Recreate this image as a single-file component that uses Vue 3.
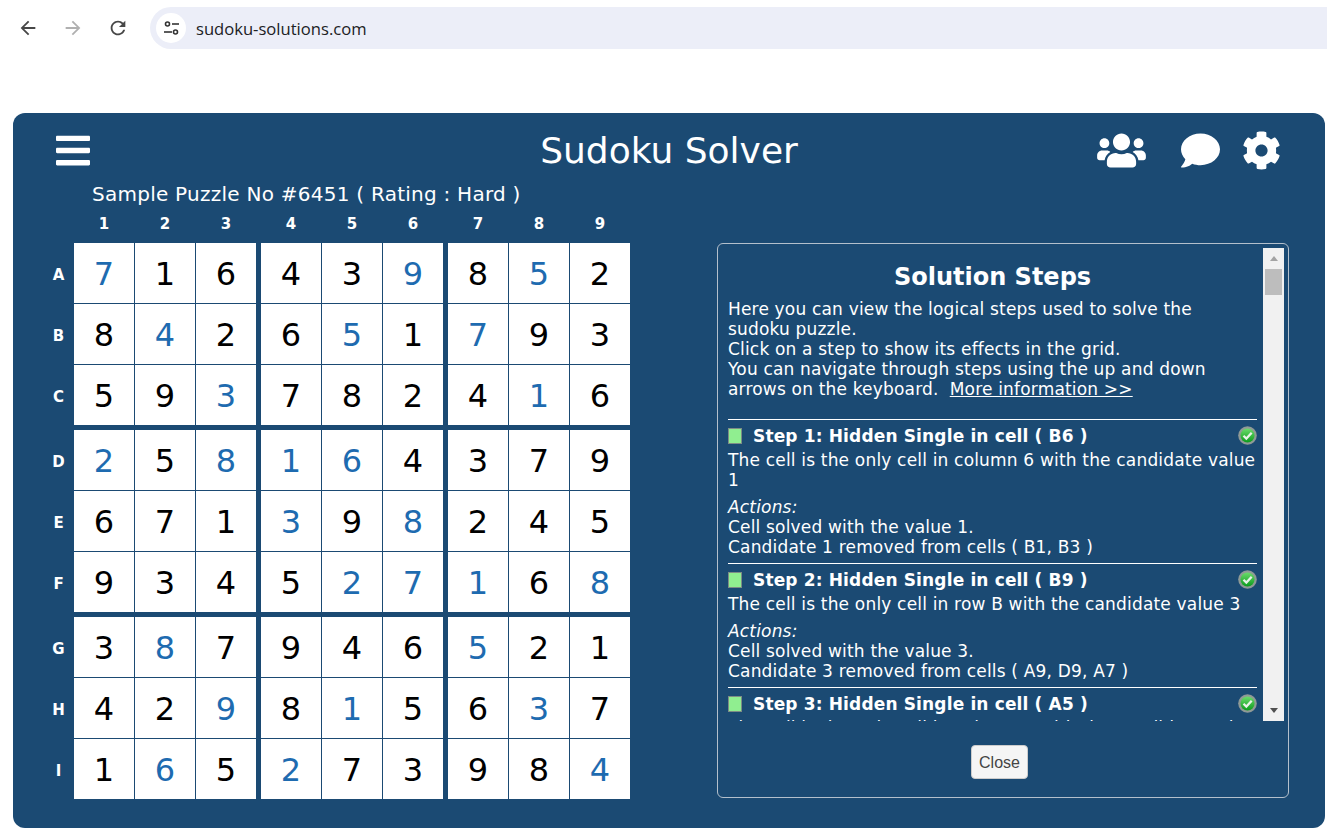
<script setup>
const rowNames = ['A', 'B', 'C', 'D', 'E', 'F', 'G', 'H', 'I'];
const columns = [1, 2, 3, 4, 5, 6, 7, 8, 9];

const values = [
  '716439852',
  '842651793',
  '593782416',
  '258164379',
  '671398245',
  '934527168',
  '387946521',
  '429815637',
  '165273984'
];

// columns of the digits found by the solver (blue ones)
const solved = [
  [0, 5, 7],
  [1, 4, 6],
  [2, 7],
  [0, 2, 3, 4],
  [3, 5],
  [4, 5, 6, 8],
  [1, 6],
  [2, 4, 7],
  [1, 3, 8]
];

const steps = [
  {
    title: 'Step 1: Hidden Single in cell ( B6 )',
    text: 'The cell is the only cell in column 6 with the candidate value 1',
    actions: ['Cell solved with the value 1.', 'Candidate 1 removed from cells ( B1, B3 )']
  },
  {
    title: 'Step 2: Hidden Single in cell ( B9 )',
    text: 'The cell is the only cell in row B with the candidate value 3',
    actions: ['Cell solved with the value 3.', 'Candidate 3 removed from cells ( A9, D9, A7 )']
  },
  {
    title: 'Step 3: Hidden Single in cell ( A5 )',
    text: 'The cell is the only cell in column 5 with the candidate value 3',
    actions: ['Cell solved with the value 3.']
  }
];
</script>

<template>
  <div class="page">
    <div class="browser-bar">
      <button class="nav-btn">
        <svg viewBox="0 0 24 24" width="22" height="22"><path fill="#474747" d="M20 11H7.83l5.59-5.59L12 4l-8 8 8 8 1.41-1.41L7.83 13H20v-2z" /></svg>
      </button>
      <button class="nav-btn">
        <svg viewBox="0 0 24 24" width="22" height="22"><path fill="#b0b0b0" d="M4 11h12.17l-5.59-5.59L12 4l8 8-8 8-1.41-1.41L16.17 13H4v-2z" /></svg>
      </button>
      <button class="nav-btn">
        <svg viewBox="0 0 24 24" width="22" height="22"><path fill="#474747" d="M17.65 6.35C16.2 4.9 14.21 4 12 4c-4.42 0-7.99 3.58-7.99 8s3.57 8 7.99 8c3.73 0 6.84-2.55 7.73-6h-2.08c-.82 2.33-3.04 4-5.65 4-3.31 0-6-2.69-6-6s2.69-6 6-6c1.66 0 3.14.69 4.22 1.78L13 11h7V4l-2.35 2.35z" /></svg>
      </button>
      <div class="address">
        <span class="site-icon">
          <svg viewBox="0 0 18 18" width="18" height="18" fill="none" stroke="#333" stroke-width="1.6">
            <circle cx="5.5" cy="5" r="2" />
            <path d="M10 5h7" />
            <path d="M2 13h8" />
            <circle cx="13.5" cy="13" r="2" />
          </svg>
        </span>
        <span class="url">sudoku-solutions.com</span>
      </div>
    </div>

    <div class="solver">
      <header class="solver-head">
        <div class="head-left">
          <svg class="icon-bars" viewBox="0 0 448 512"><path fill="#fff" d="M16 132h416c8.837 0 16-7.163 16-16V76c0-8.837-7.163-16-16-16H16C7.163 60 0 67.163 0 76v40c0 8.837 7.163 16 16 16zm0 160h416c8.837 0 16-7.163 16-16v-40c0-8.837-7.163-16-16-16H16c-8.837 0-16 7.163-16 16v40c0 8.837 7.163 16 16 16zm0 160h416c8.837 0 16-7.163 16-16v-40c0-8.837-7.163-16-16-16H16c-8.837 0-16 7.163-16 16v40c0 8.837 7.163 16 16 16z" /></svg>
        </div>
        <h1 class="solver-title">Sudoku Solver</h1>
        <div class="head-right">
          <svg class="icon-users" viewBox="0 0 640 512"><path fill="#fff" d="M96 224c35.3 0 64-28.7 64-64s-28.7-64-64-64-64 28.7-64 64 28.7 64 64 64zm448 0c35.3 0 64-28.7 64-64s-28.7-64-64-64-64 28.7-64 64 28.7 64 64 64zm32 32h-64c-17.6 0-33.5 7.1-45.1 18.6 40.3 22.1 68.9 62 75.1 109.4h66c17.7 0 32-14.3 32-32v-32c0-35.3-28.7-64-64-64zm-256 0c61.9 0 112-50.1 112-112S381.9 32 320 32 208 82.1 208 144s50.1 112 112 112zm76.8 32h-8.3c-20.8 10-43.9 16-68.5 16s-47.6-6-68.5-16h-8.3C179.6 288 128 339.6 128 403.2V432c0 26.5 21.5 48 48 48h288c26.5 0 48-21.5 48-48v-28.8c0-63.6-51.6-115.2-115.2-115.2zm-223.7-13.4C161.5 263.1 145.6 256 128 256H64c-35.3 0-64 28.7-64 64v32c0 17.7 14.3 32 32 32h65.9c6.3-47.4 34.9-87.3 75.2-109.4z" /></svg>
          <svg class="icon-comment" viewBox="0 0 512 512"><path fill="#fff" d="M256 32C114.6 32 0 125.1 0 240c0 49.6 21.4 95 57 130.7C44.5 421.1 2.7 466 2.2 466.5c-2.2 2.3-2.8 5.7-1.5 8.7S4.8 480 8 480c66.3 0 116-31.8 140.6-51.4 32.7 12.3 69 19.4 107.4 19.4 141.4 0 256-93.1 256-208S397.4 32 256 32z" /></svg>
          <svg class="icon-cog" viewBox="0 0 512 512"><path fill="#fff" d="M487.4 315.7l-42.6-24.6c4.3-23.2 4.3-47 0-70.2l42.6-24.6c4.9-2.8 7.1-8.6 5.5-14-11.1-35.6-30-67.8-54.7-94.6-3.8-4.1-10-5.1-14.8-2.3L380.8 110c-17.9-15.4-38.5-27.3-60.8-35.1V25.8c0-5.6-3.9-10.5-9.4-11.7-36.7-8.2-74.3-7.8-109.2 0-5.5 1.2-9.4 6.1-9.4 11.7V75c-22.2 7.9-42.8 19.8-60.8 35.1L88.7 85.5c-4.9-2.8-11-1.9-14.8 2.3-24.7 26.7-43.6 58.9-54.7 94.6-1.7 5.4.6 11.2 5.5 14L67.3 221c-4.3 23.2-4.3 47 0 70.2l-42.6 24.6c-4.9 2.8-7.1 8.6-5.5 14 11.1 35.6 30 67.8 54.7 94.6 3.8 4.1 10 5.1 14.8 2.3l42.6-24.6c17.9 15.4 38.5 27.3 60.8 35.1v49.2c0 5.6 3.9 10.5 9.4 11.7 36.7 8.2 74.3 7.8 109.2 0 5.5-1.2 9.4-6.1 9.4-11.7v-49.2c22.2-7.9 42.8-19.8 60.8-35.1l42.6 24.6c4.9 2.8 11 1.9 14.8-2.3 24.7-26.7 43.6-58.9 54.7-94.6 1.5-5.5-.7-11.3-5.6-14.1zM256 336c-44.1 0-80-35.9-80-80s35.9-80 80-80 80 35.9 80 80-35.9 80-80 80z" /></svg>
        </div>
      </header>

      <div class="puzzle-name">Sample Puzzle No #6451 ( Rating : Hard )</div>

      <div class="solver-main">
        <div class="board">
          <div class="board-row head-row">
            <span class="row-label"></span>
            <span
              v-for="c in columns"
              :key="c"
              class="col-label"
              :class="{ 'block-left': c === 4 || c === 7 }"
            >{{ c }}</span>
          </div>
          <div
            v-for="(name, r) in rowNames"
            :key="name"
            class="board-row"
            :class="{ 'block-top': r === 3 || r === 6 }"
          >
            <span class="row-label">{{ name }}</span>
            <span
              v-for="(digit, c) in values[r]"
              :key="c"
              class="cell"
              :class="{ 'block-left': c === 3 || c === 6, solved: solved[r].includes(c) }"
            >{{ digit }}</span>
          </div>
        </div>

        <div class="steps-dialog">
          <div class="steps-frame">
            <div class="steps-scroll">
              <h2 class="steps-title">Solution Steps</h2>
              <p class="steps-intro">
                Here you can view the logical steps used to solve the<br />
                sudoku puzzle.<br />
                Click on a step to show its effects in the grid.<br />
                You can navigate through steps using the up and down<br />
                arrows on the keyboard.&nbsp; <a class="more-link">More information &gt;&gt;</a>
              </p>
              <div v-for="step in steps" :key="step.title" class="step">
                <div class="step-head">
                  <span class="step-mark"></span>
                  <span class="step-name">{{ step.title }}</span>
                  <svg class="step-ok" viewBox="0 0 20 20" width="19" height="19">
                    <defs>
                      <linearGradient id="okFill" x1="0" y1="0" x2="0" y2="1">
                        <stop offset="0" stop-color="#6bdc6b" />
                        <stop offset="1" stop-color="#0b9a1c" />
                      </linearGradient>
                    </defs>
                    <circle cx="10" cy="10" r="9.8" fill="#8f9a96" />
                    <circle cx="10" cy="10" r="7.4" fill="url(#okFill)" />
                    <path d="M5.8 10.2l3 3 5.6-6" fill="none" stroke="#e8f2e8" stroke-width="2.4" />
                  </svg>
                </div>
                <div class="step-text">{{ step.text }}</div>
                <div class="step-actions">
                  <em>Actions:</em>
                  <div v-for="action in step.actions" :key="action">{{ action }}</div>
                </div>
              </div>
            </div>
            <div class="scrollbar">
              <span class="arrow-up"></span>
              <span class="thumb"></span>
              <span class="arrow-down"></span>
            </div>
          </div>
          <div class="dialog-foot">
            <button class="close-btn">Close</button>
          </div>
        </div>
      </div>
    </div>
  </div>
</template>

<style>
html, body {
  overflow: hidden;
  background: #fff;
}
</style>

<style scoped>
.page {
  width: 1327px;
  height: 828px;
  overflow: hidden;
  font-family: "DejaVu Sans", Verdana, sans-serif;
}

.browser-bar {
  display: flex;
  align-items: center;
  height: 42px;
  padding: 7px 0 0 5px;
  margin-bottom: 64px;
  overflow: hidden;
}

.nav-btn {
  display: flex;
  align-items: center;
  justify-content: center;
  width: 45px;
  height: 42px;
  padding: 0;
  border: none;
  background: none;
}

.address {
  display: flex;
  align-items: center;
  flex: 1;
  gap: 10px;
  height: 42px;
  margin-left: 10px;
  margin-right: -30px;
  padding-left: 6px;
  border-radius: 21px;
  background: #eceef8;
}

.site-icon {
  display: flex;
  align-items: center;
  justify-content: center;
  width: 30px;
  height: 30px;
  border-radius: 50%;
  background: #fff;
}

.url {
  font-family: "Open Sans", sans-serif;
  font-size: 16.6px;
  color: #202124;
}

.solver {
  height: 715px;
  margin: 0 2px 0 13px;
  padding-top: 17px;
  box-sizing: border-box;
  border-radius: 12px;
  background: #1b4a73;
  color: #fff;
}

.solver-head {
  display: grid;
  grid-template-columns: 1fr auto 1fr;
  align-items: center;
  height: 40px;
}

.head-left {
  display: flex;
  padding-left: 43px;
}

.head-right {
  display: flex;
  align-items: center;
  justify-content: flex-end;
  padding-right: 44px;
}

.icon-bars {
  width: 34px;
  height: 39px;
}

.icon-users {
  width: 49px;
  height: 39px;
  margin-right: 35px;
}

.icon-comment {
  width: 39px;
  height: 39px;
  margin-right: 22px;
}

.icon-cog {
  width: 39px;
  height: 39px;
}

.solver-title {
  height: 40px;
  margin: 0;
  font-size: 36px;
  font-weight: 400;
  line-height: 41px;
}

.puzzle-name {
  margin: 12px 0 0 79px;
  font-size: 20px;
  letter-spacing: 0.25px;
  line-height: 24px;
}

.solver-main {
  display: flex;
  align-items: flex-end;
  padding-left: 31px;
}

.board {
  display: flex;
  flex-direction: column;
  gap: 1px;
}

.board-row {
  display: flex;
  gap: 1px;
}

.head-row {
  height: 36px;
  padding-top: 8px;
  box-sizing: border-box;
}

.row-label {
  display: flex;
  align-items: center;
  justify-content: center;
  width: 29px;
  padding-top: 3px;
  box-sizing: border-box;
  font-size: 15px;
  font-weight: 700;
}

.col-label {
  width: 60px;
  font-size: 15px;
  font-weight: 700;
  line-height: 20px;
  text-align: center;
}

.cell {
  display: flex;
  align-items: center;
  justify-content: center;
  width: 60px;
  height: 60px;
  padding-top: 2px;
  box-sizing: border-box;
  background: #fff;
  color: #000;
  font-size: 32px;
}

.cell.solved {
  color: #1e6bb0;
}

.block-left {
  margin-left: 4px;
}

.block-top {
  margin-top: 4px;
}

.steps-dialog {
  width: 572px;
  height: 555px;
  margin: 0 0 1px 87px;
  padding-top: 4px;
  box-sizing: border-box;
  border: 1px solid #b4c0cc;
  border-radius: 6px;
}

.steps-frame {
  display: flex;
  height: 473px;
}

.steps-scroll {
  width: 529px;
  padding-left: 10px;
  overflow: hidden;
  font-size: 17px;
  letter-spacing: 0.18px;
  line-height: 20px;
}

.steps-title {
  margin: 14px 0 7px;
  font-size: 24px;
  font-weight: 700;
  letter-spacing: 0;
  line-height: 30px;
  text-align: center;
}

.steps-intro {
  margin: 0 0 20px;
}

.more-link {
  text-decoration: underline;
}

.step {
  padding-bottom: 6px;
  border-top: 1px solid #fff;
}

.step-head {
  display: flex;
  align-items: center;
  height: 20px;
  margin: 6px 0 4px;
}

.step-mark {
  width: 14px;
  height: 16px;
  box-sizing: border-box;
  border: 1px solid #7d8c86;
  background: #90ee90;
}

.step-name {
  flex: 1;
  margin-left: 11px;
  font-weight: 700;
  letter-spacing: 0.15px;
}

.step-ok {
  margin-top: -2px;
}

.step-actions {
  margin-top: 7px;
}

.scrollbar {
  display: flex;
  flex-direction: column;
  align-items: center;
  width: 21px;
  margin-left: 6px;
  background: #f1f1f1;
}

.arrow-up {
  width: 0;
  height: 0;
  margin-top: 8px;
  border: 4.5px solid transparent;
  border-top: none;
  border-bottom: 5px solid #a3a3a3;
}

.thumb {
  width: 17px;
  height: 26px;
  margin-top: 8px;
  background: #bdbdbd;
}

.arrow-down {
  width: 0;
  height: 0;
  margin-top: auto;
  margin-bottom: 8px;
  border: 4.5px solid transparent;
  border-bottom: none;
  border-top: 5px solid #505050;
}

.dialog-foot {
  display: flex;
  justify-content: center;
  padding: 24px 7px 0 0;
}

.close-btn {
  width: 57px;
  height: 34px;
  padding: 1px 0 0;
  border: 1px solid #ccc;
  border-radius: 4px;
  background: #f5f5f5;
  color: #444;
  font-family: "Liberation Sans", Arial, sans-serif;
  font-size: 16px;
}
</style>
